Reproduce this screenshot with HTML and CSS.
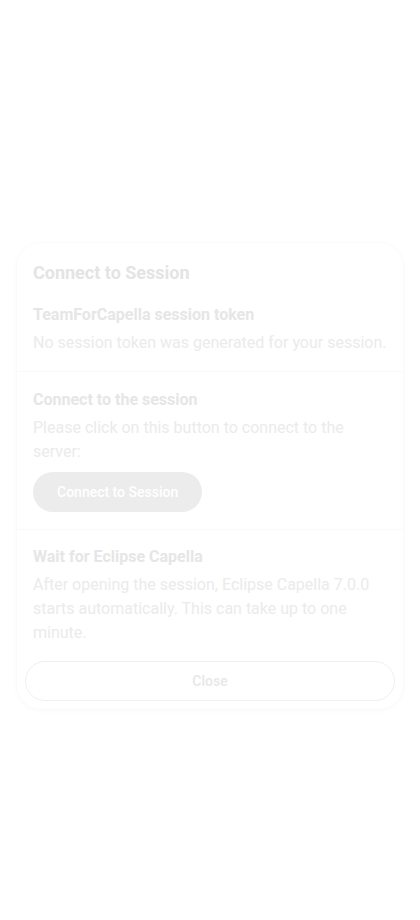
FILE: index.html
```html
<!DOCTYPE html>
<html>
<head>
<meta charset="utf-8">
<link rel="stylesheet" href="styles.css">
</head>
<body>
<div class="screen">
  <div class="modal">
    <h1 class="title">Connect to Session</h1>
    <section class="sec sec-first">
      <h2 class="sec-head">TeamForCapella session token</h2>
      <p class="sec-text">No session token was generated for your session.</p>
    </section>
    <section class="sec sec-mid">
      <h2 class="sec-head">Connect to the session</h2>
      <p class="sec-text">Please click on this button to connect to the server:</p>
      <button class="btn-primary">Connect to Session</button>
    </section>
    <section class="sec sec-last">
      <h2 class="sec-head">Wait for Eclipse Capella</h2>
      <p class="sec-text">After opening the session, Eclipse Capella 7.0.0 starts automatically. This can take up to one minute.</p>
    </section>
    <div class="footer">
      <button class="btn-close">Close</button>
    </div>
  </div>
</div>
</body>
</html>
```

FILE: styles.css
```css
html, body {
  margin: 0;
  padding: 0;
  background: #ffffff;
  font-family: Roboto, "Noto Sans", Arial, sans-serif;
}
.screen {
  width: 420px;
  height: 920px;
  box-sizing: border-box;
  padding-top: 243px;
  display: flex;
  align-items: flex-start;
  justify-content: center;
}
.modal {
  width: 386px;
  background: #ffffff;
  border-radius: 24px;
  box-shadow: 0 1px 6px rgba(0,0,0,0.03), 0 0 0 1px rgba(0,0,0,0.008);
}
.title {
  margin: 0;
  padding: 18px 16px 7px;
  font-size: 18px;
  line-height: 24px;
  font-weight: 700;
  color: #e4e4e4;
}
.sec {
  padding: 16px 12px 17px 16px;
  border-bottom: 1px solid #f9f9f9;
}
.sec-first {
  padding-top: 12px;
  padding-bottom: 16px;
}
.sec-mid {
  padding-top: 17px;
  padding-bottom: 17px;
}
.sec-last {
  border-bottom: none;
  padding-bottom: 16px;
}
.sec-head {
  margin: 0 0 5px;
  font-size: 16px;
  line-height: 22px;
  font-weight: 700;
  color: #e6e6e6;
}
.sec-text {
  margin: 0;
  font-size: 16px;
  line-height: 24px;
  color: #ebebeb;
}
.btn-primary {
  margin-top: 8px;
  height: 40px;
  padding: 0 24px;
  border: none;
  border-radius: 20px;
  background: #ececec;
  color: #ffffff;
  font-family: Roboto, sans-serif;
  font-size: 14px;
  font-weight: 500;
}
.footer {
  padding: 0 8px 8px;
}
.btn-close {
  width: 100%;
  height: 40px;
  border: 1px solid #f0f0f0;
  border-radius: 20px;
  background: #ffffff;
  color: #e8e8e8;
  font-family: Roboto, sans-serif;
  font-size: 14px;
  font-weight: 500;
}
```
